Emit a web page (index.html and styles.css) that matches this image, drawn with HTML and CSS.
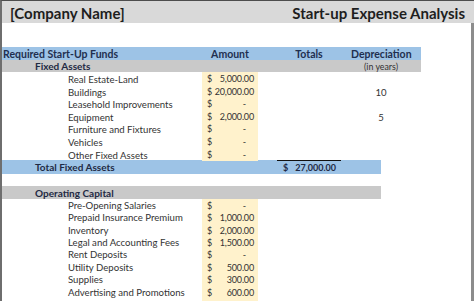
FILE: index.html
```html
<!DOCTYPE html>
<html>
<head>
<meta charset="utf-8">
<link rel="stylesheet" href="styles.css">
</head>
<body>
<div class="sheet">
  <header class="title">
    <span>[Company Name]</span>
    <span>Start-up Expense Analysis</span>
  </header>
  <div class="body">
    <div class="row head">
      <div class="lbl">Required Start-Up Funds</div>
      <div class="amt">Amount</div>
      <div class="tot">Totals</div>
      <div class="dep">Depreciation</div>
    </div>
    <div class="row sub">
      <div class="lbl sec">Fixed Assets</div>
      <div class="dep note">(in years)</div>
    </div>
    <div class="group fixed">
      <div class="row item"><div class="lbl">Real Estate-Land</div><div class="amt money"><span>$</span><span>5,000.00</span></div></div>
      <div class="row item"><div class="lbl">Buildings</div><div class="amt money"><span>$</span><span>20,000.00</span></div><div class="dep num">10</div></div>
      <div class="row item"><div class="lbl">Leasehold Improvements</div><div class="amt money"><span>$</span><span class="dash">-</span></div></div>
      <div class="row item"><div class="lbl">Equipment</div><div class="amt money"><span>$</span><span>2,000.00</span></div><div class="dep num">5</div></div>
      <div class="row item"><div class="lbl">Furniture and Fixtures</div><div class="amt money"><span>$</span><span class="dash">-</span></div></div>
      <div class="row item"><div class="lbl">Vehicles</div><div class="amt money"><span>$</span><span class="dash">-</span></div></div>
      <div class="row item"><div class="lbl">Other Fixed Assets</div><div class="amt money"><span>$</span><span class="dash">-</span></div></div>
    </div>
    <div class="row total">
      <div class="lbl sec">Total Fixed Assets</div>
      <div class="tot sum"><span>$</span><span>27,000.00</span></div>
    </div>
    <div class="gap"></div>
    <div class="row opband">
      <div class="lbl sec">Operating Capital</div>
    </div>
    <div class="group operating">
      <div class="row item"><div class="lbl">Pre-Opening Salaries</div><div class="amt money"><span>$</span><span class="dash">-</span></div></div>
      <div class="row item"><div class="lbl">Prepaid Insurance Premium</div><div class="amt money"><span>$</span><span>1,000.00</span></div></div>
      <div class="row item"><div class="lbl">Inventory</div><div class="amt money"><span>$</span><span>2,000.00</span></div></div>
      <div class="row item"><div class="lbl">Legal and Accounting Fees</div><div class="amt money"><span>$</span><span>1,500.00</span></div></div>
      <div class="row item"><div class="lbl">Rent Deposits</div><div class="amt money"><span>$</span><span class="dash">-</span></div></div>
      <div class="row item"><div class="lbl">Utility Deposits</div><div class="amt money"><span>$</span><span>500.00</span></div></div>
      <div class="row item"><div class="lbl">Supplies</div><div class="amt money"><span>$</span><span>300.00</span></div></div>
      <div class="row item"><div class="lbl">Advertising and Promotions</div><div class="amt money"><span>$</span><span>600.00</span></div></div>
      <div class="row item"><div class="amt money"></div></div>
    </div>
  </div>
</div>
</body>
</html>
```
FILE: styles.css
```css
html, body {
  margin: 0;
  padding: 0;
  background: #ffffff;
}
body {
  font-family: Lato, "Open Sans", sans-serif;
  color: #333333;
}
.sheet {
  width: 474px;
  height: 301px;
  box-sizing: border-box;
  border-top: 1px solid #4d4d4d;
  border-left: 2px solid #6e6e6e;
  overflow: hidden;
  display: flex;
  flex-direction: column;
}
.title {
  height: 22px;
  flex: none;
  background: #d9d9d9;
  display: flex;
  justify-content: space-between;
  align-items: center;
  padding: 2px 9px 0 8px;
  box-sizing: border-box;
  font-weight: 700;
  font-size: 15px;
  color: #1e1e1e;
}
.body {
  flex: 1;
  border-right: 3px solid #8c8c8c;
  padding-top: 24px;
}
.row {
  display: grid;
  grid-template-columns: 200px 56px 19px 64px 10px 60px 10px;
  width: 419px;
  font-size: 9.6px;
  align-items: center;
}
.lbl { grid-column: 1; grid-row: 1; white-space: nowrap; }
.amt { grid-column: 2; grid-row: 1; text-align: center; height: 100%; display: flex; align-items: center; justify-content: center; white-space: nowrap; }
.tot { grid-column: 4; grid-row: 1; text-align: center; }
.dep { grid-column: 6; grid-row: 1; text-align: center; white-space: nowrap; }

.head {
  height: 13px;
  background: #9dc3e6;
  font-weight: 700;
  font-size: 10.5px;
  color: #1f2f4f;
  padding-top: 1px;
  box-sizing: border-box;
}
.head .lbl { padding-left: 1px; }
.sub {
  height: 12px;
  background: #c9c9c9;
}
.sec {
  padding-left: 33px;
  font-weight: 700;
  font-size: 10px;
  color: #1f2a44;
}
.note { font-size: 8.8px; color: #333; }

.item { height: 12.6px; padding-top: 2px; box-sizing: border-box; }
.item .lbl { padding-left: 66px; }
.operating .item { height: 12.4px; padding-top: 0; }
.money {
  background: #fff2cc;
  justify-content: space-between;
  padding: 0 4px 0 5px;
  box-sizing: border-box;
  font-size: 9px;
  letter-spacing: -0.15px;
}
.item .money { margin-top: -2px; height: calc(100% + 2px); }
.operating .item .money { margin-top: 0; height: 100%; }
.dash { margin-right: 8px; }
.num { color: #333333; }

.total {
  height: 14px;
  width: 379px;
  background: #9dc3e6;
}
.sum {
  height: 100%;
  box-sizing: border-box;
  border-top: 1px solid #111;
  display: flex;
  align-items: center;
  justify-content: space-between;
  padding: 0 5px 0 6px;
  font-weight: 700;
  font-size: 9px;
  color: #1f2a44;
}
.gap { height: 12px; }
.opband {
  height: 13px;
  width: 379px;
  background: #c9c9c9;
}
```
